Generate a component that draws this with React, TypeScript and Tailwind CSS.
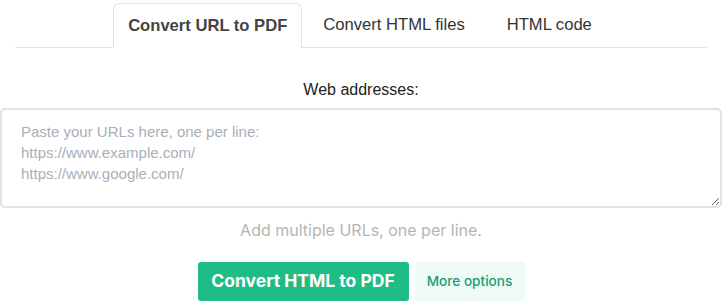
import React from "react";

const tabs = [
  { label: "Convert URL to PDF", active: true },
  { label: "Convert HTML files", active: false },
  { label: "HTML code", active: false },
];

export default function App() {
  return (
    <div className="w-[722px] h-[307px] bg-white overflow-hidden" style={{ fontFamily: '"Liberation Sans", Arial, sans-serif' }}>
      {/* Tab bar */}
      <div className="pt-[3px] px-[15px]">
        <nav className="flex justify-center border-b border-[#e3e3e3] pl-[4px]">
          {tabs.map((tab) => (
            <div
              key={tab.label}
              className={
                tab.active
                  ? "h-[45px] px-[14px] flex items-center text-[16.6px] font-bold text-[#444] bg-white border border-[#e0e0e0] border-b-0 rounded-t-[6px] -mb-px"
                  : "h-[44px] px-[21px] flex items-center text-[16.6px] text-[#333]"
              }
            >
              {tab.label}
            </div>
          ))}
        </nav>
      </div>

      {/* Form */}
      <div className="pt-[32px] flex flex-col items-center">
        <label className="text-[16px] text-[#222] leading-5 mb-[8px]">
          Web addresses:
        </label>
        <textarea
          className="w-[722px] h-[100px] border-2 border-[#e2e2e2] rounded-[5px] px-[19px] pt-[11px] pb-[9px] text-[15px] leading-[21px] text-[#333] placeholder:text-[#a7b0ba] outline-none"
          placeholder={"Paste your URLs here, one per line:\nhttps://www.example.com/\nhttps://www.google.com/"}
        />
        <p className="mt-[10px] text-[16px] text-[#b5b5b5]" style={{ fontFamily: 'Inter, "Liberation Sans", sans-serif' }}>
          Add multiple URLs, one per line.
        </p>
        <div className="mt-[20px] flex gap-[6px]" style={{ fontFamily: 'Inter, "Liberation Sans", sans-serif' }}>
          <button className="w-[211px] h-[39px] rounded-[3px] bg-[#1fbd86] text-white text-[17.5px] font-bold">
            Convert HTML to PDF
          </button>
          <button className="w-[110px] h-[39px] rounded-[3px] bg-[#eefaf6] text-[#199e6f] text-[13.6px] font-medium">
            More options
          </button>
        </div>
      </div>
    </div>
  );
}
